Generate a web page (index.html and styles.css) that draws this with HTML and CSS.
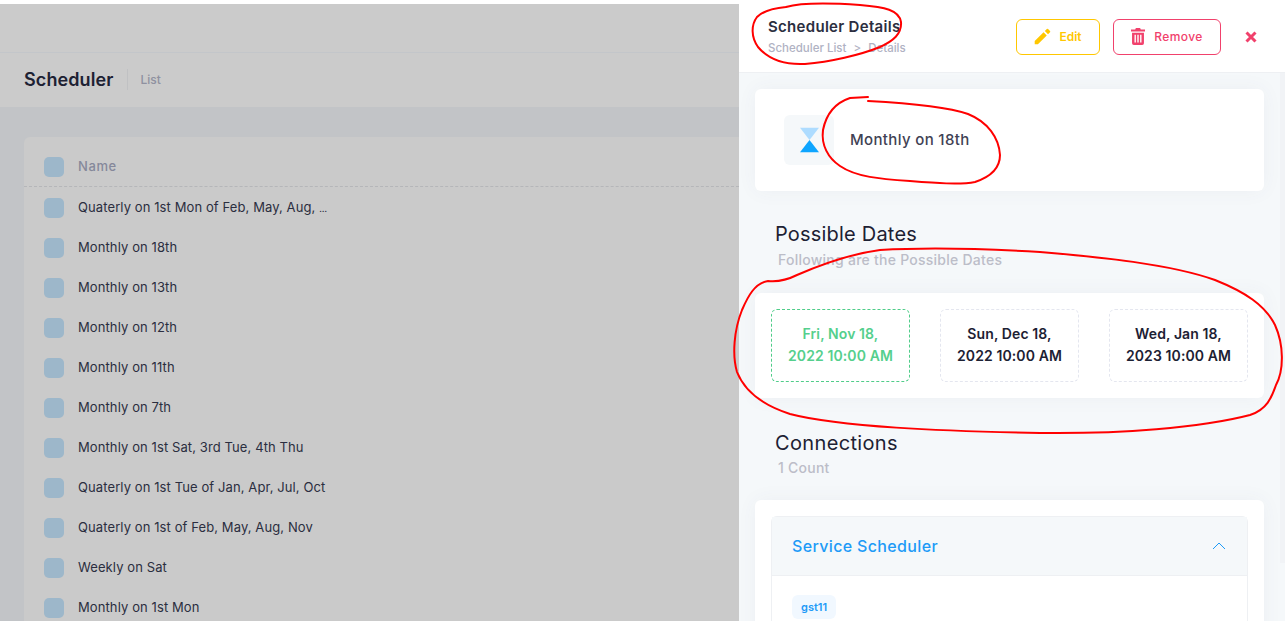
FILE: index.html
```html
<!DOCTYPE html>
<html lang="en">

<head>
    <meta charset="UTF-8">
    <meta name="viewport" content="width=device-width, initial-scale=1.0">
    <title>Scheduler Details</title>
    <link rel="stylesheet" href="styles.css">
</head>

<body>
    <div class="page">
        <main class="list-side">
            <div class="top-bar"></div>
            <div class="sub-bar">
                <h1 class="sub-title">Scheduler</h1>
                <span class="sub-crumb">List</span>
            </div>
            <div class="list-wrap">
                <section class="list-card">
                    <div class="row head-row"><span class="check"></span><span>Name</span></div>
                    <div class="row"><span class="check"></span><span>Quaterly on 1st Mon of Feb, May, Aug, <span class="dots">…</span></span></div>
                    <div class="row"><span class="check"></span><span>Monthly on 18th</span></div>
                    <div class="row"><span class="check"></span><span>Monthly on 13th</span></div>
                    <div class="row"><span class="check"></span><span>Monthly on 12th</span></div>
                    <div class="row"><span class="check"></span><span>Monthly on 11th</span></div>
                    <div class="row"><span class="check"></span><span>Monthly on 7th</span></div>
                    <div class="row"><span class="check"></span><span>Monthly on 1st Sat, 3rd Tue, 4th Thu</span></div>
                    <div class="row"><span class="check"></span><span>Quaterly on 1st Tue of Jan, Apr, Jul, Oct</span></div>
                    <div class="row"><span class="check"></span><span>Quaterly on 1st of Feb, May, Aug, Nov</span></div>
                    <div class="row"><span class="check"></span><span>Weekly on Sat</span></div>
                    <div class="row"><span class="check"></span><span>Monthly on 1st Mon</span></div>
                </section>
            </div>
        </main>

        <aside class="drawer">
            <header class="drawer-head">
                <div class="drawer-titles">
                    <h2 class="drawer-title">Scheduler Details</h2>
                    <div class="drawer-crumb">Scheduler List<span class="crumb-sep">&gt;</span>Details</div>
                </div>
                <button class="btn btn-edit">
                    <svg class="btn-icon" viewBox="0 0 24 24"><path fill="currentColor" d="M1 18.500V23h4.500L18 10.500 13.500 6 1 18.500zM22.600 5.900a1.300 1.300 0 000-1.800l-2.700-2.700a1.300 1.300 0 00-1.800 0L15.300 4.200l4.500 4.500 2.800-2.800z"/></svg>
                    Edit
                </button>
                <button class="btn btn-remove">
                    <svg class="btn-icon trash-icon" viewBox="0 0 20 24"><path fill="currentColor" fill-rule="evenodd" d="M7 0h6l1 2h6v3H0V2h6l1-2zM1.500 6.500h17V21.500A2.500 2.500 0 0116 24H4a2.500 2.500 0 01-2.500-2.500V6.500zM5 9.500v11h2v-11H5zM9 9.500v11h2v-11H9zM13 9.500v11h2v-11h-2z"/></svg>
                    Remove
                </button>
                <button class="btn-close">
                    <svg class="close-icon" viewBox="0 0 12 12"><path d="M1.500 1.500l9 9M10.500 1.500l-9 9"/></svg>
                </button>
            </header>

            <div class="drawer-body">
                <section class="card info-card">
                    <div class="icon-tile">
                        <svg class="glass" viewBox="0 0 20 26">
                            <path fill="#aedcff" d="M0 0h20L10 13z"/>
                            <path fill="#0ea5ff" d="M10 13l10 13H0z"/>
                        </svg>
                    </div>
                    <div class="info-name">Monthly on 18th</div>
                </section>

                <h3 class="section-title">Possible Dates</h3>
                <p class="section-sub">Following are the Possible Dates</p>
                <section class="card dates-card">
                    <div class="date-tile date-active">Fri, Nov 18,<br>2022 10:00 AM</div>
                    <div class="date-tile">Sun, Dec 18,<br>2022 10:00 AM</div>
                    <div class="date-tile">Wed, Jan 18,<br>2023 10:00 AM</div>
                </section>

                <h3 class="section-title conn-title">Connections</h3>
                <p class="section-sub count-sub">1 Count</p>
                <section class="card conn-card">
                    <div class="accordion">
                        <div class="acc-head">
                            <span>Service Scheduler</span>
                            <svg class="chevron" viewBox="0 0 14 8"><path d="M1 7l6-6 6 6"/></svg>
                        </div>
                        <div class="acc-body"><span class="tag">gst11</span></div>
                    </div>
                </section>
            </div>
            <div class="scroll-strip"></div>
        </aside>
    </div>

    <!-- pen marks drawn over the screenshot -->
    <svg class="scribbles" viewBox="0 0 1285 621">
        <path d="M786 7C800 3 830 3 860 5C885 7 899 10 901 22C902 34 893 41 880 47C860 55 830 62 805 64C785 65 768 59 758 47C751 37 751 25 757 17C764 10 775 8 786 7"/>
        <path d="M868 97L850 98C835 103 826 115 823 130C821 145 828 158 840 166C856 177 880 179 910 181C935 183 960 185 975 182C990 177 1000 168 1000 155C999 138 988 122 968 114C945 106 905 103 868 101"/>
        <path d="M768 281C755 283 748 296 742 310C734 330 732 355 737 372C745 392 765 406 790 414C840 427 940 431 1040 433C1120 434 1200 428 1250 415C1268 409 1272 396 1276 385C1284 370 1284 345 1275 325C1265 305 1245 292 1215 280C1170 264 1100 257 1040 252C990 249 930 247 880 250C850 254 820 265 797 275C787 280 777 282 768 281"/>
    </svg>
</body>

</html>
```

FILE: styles.css
```css
* {
    margin: 0;
    padding: 0;
    box-sizing: border-box;
}

body {
    font-family: "Inter", "Open Sans", sans-serif;
    background-color: #fff;
    overflow: hidden;
    height: 621px;
}

.page {
    display: flex;
    height: 621px;
}

/* left side, dimmed by the drawer backdrop */
.list-side {
    width: 739px;
    margin-top: 4px;
    background-color: #c2c4c7;
    overflow: hidden;
}

.top-bar {
    height: 49px;
    background-color: #cbcbcb;
    border-bottom: 1px solid #c3c6ca;
}

.sub-bar {
    display: flex;
    align-items: center;
    height: 54px;
    padding: 0 0 2px 24px;
    background-color: #cbcbcb;
}

.sub-title {
    font-size: 18px;
    font-weight: 600;
    letter-spacing: 0.1px;
    color: #1d2133;
    padding-right: 13px;
    border-right: 1px solid #c0c1c3;
    line-height: 21px;
}

.sub-crumb {
    font-size: 12px;
    font-weight: 500;
    color: #8f91a0;
    margin-left: 13px;
}

.list-wrap {
    padding: 30px 0 0 24px;
}

.list-card {
    background-color: #cacaca;
    border-radius: 6px 0 0 0;
    padding-top: 9px;
}

.row {
    display: flex;
    align-items: center;
    height: 40px;
    padding-left: 20px;
    font-size: 13px;
    letter-spacing: 0.1px;
    color: #2b2e40;
}

.head-row {
    height: 41px;
    border-bottom: 1px dashed #b5b6b9;
    font-weight: 500;
    letter-spacing: 0.6px;
    color: #85889a;
}

.check {
    width: 20px;
    height: 20px;
    border-radius: 5px;
    background-color: #9db7ca;
    margin: 2px 14px 0 0;
}

.dots {
    font-size: 9px;
}

/* details drawer */
.drawer {
    position: relative;
    width: 546px;
    background-color: #f5f8fa;
    overflow: hidden;
}

.drawer-head {
    display: flex;
    align-items: center;
    height: 73px;
    padding: 0 0 0 29px;
    background-color: #fff;
    border-bottom: 1px solid #eef0f3;
}

.drawer-titles {
    width: 248px;
}

.drawer-title {
    font-size: 15px;
    font-weight: 600;
    letter-spacing: 0.3px;
    color: #2b2e40;
    line-height: 20px;
}

.drawer-crumb {
    font-size: 11.500px;
    font-weight: 500;
    color: #b0b2c3;
    margin-top: 4px;
}

.crumb-sep {
    margin: 0 7px;
}

.btn {
    display: flex;
    align-items: center;
    justify-content: center;
    gap: 8px;
    height: 36px;
    margin-top: 1px;
    border-radius: 6px;
    background-color: #fff;
    font-family: inherit;
    font-size: 12px;
    font-weight: 500;
}

.btn-edit {
    width: 84px;
    color: #ffc700;
    border: 1px solid #ffc700;
    margin-right: 13px;
    font-weight: 600;
}

.btn-remove {
    width: 108px;
    color: #f1416c;
    border: 1px solid #f1416c;
    letter-spacing: 0.4px;
}

.btn-icon {
    width: 17px;
    height: 17px;
}

.trash-icon {
    width: 14px;
    margin-right: 1px;
}

.btn-close {
    border: 0;
    background: none;
    margin: 1px 0 0 24px;
    display: flex;
}

.close-icon {
    width: 12px;
    height: 12px;
    fill: none;
    stroke: #f1416c;
    stroke-width: 3;
}

.drawer-body {
    padding: 16px 21px 0 16px;
}

.card {
    background-color: #fff;
    border-radius: 6px;
    box-shadow: 0 0 20px rgba(76, 87, 125, 0.05);
}

.info-card {
    display: flex;
    align-items: center;
    height: 102px;
    padding-left: 29px;
}

.icon-tile {
    display: flex;
    align-items: center;
    justify-content: center;
    width: 50px;
    height: 50px;
    border-radius: 6px;
    background-color: #f5f8fa;
}

.glass {
    width: 19px;
    height: 26px;
}

.info-name {
    margin: -1px 0 0 16px;
    font-size: 15px;
    font-weight: 500;
    letter-spacing: 0.35px;
    color: #3f4254;
}

.section-title {
    margin: 30px 0 0 20px;
    font-size: 20px;
    font-weight: 400;
    letter-spacing: 0.2px;
    line-height: 26px;
    color: #1d2133;
}

.section-sub {
    margin: 3px 0 0 23px;
    font-size: 14px;
    font-weight: 500;
    letter-spacing: 0.25px;
    line-height: 20px;
    color: #bcbdc8;
}

.count-sub {
    margin-top: 2px;
}

.dates-card {
    display: flex;
    justify-content: space-between;
    height: 105px;
    margin-top: 23px;
    padding: 16px;
}

.date-tile {
    width: 139px;
    height: 73px;
    border: 1px dashed #e4e6ef;
    border-radius: 6px;
    font-size: 14px;
    font-weight: 600;
    letter-spacing: 0.1px;
    line-height: 22px;
    text-align: center;
    padding-top: 13px;
    color: #1d2133;
}

.date-active {
    border-color: #50cd89;
    color: #55cf8d;
}

.conn-title {
    margin-top: 32px;
    letter-spacing: 0.35px;
}

.conn-card {
    margin-top: 22px;
    padding: 16px;
    height: 200px;
}

.accordion {
    border: 1px solid #eef0f3;
    border-radius: 6px;
}

.acc-head {
    display: flex;
    align-items: center;
    justify-content: space-between;
    height: 59px;
    padding: 0 21px 0 20px;
    background-color: #f5f8fa;
    border-bottom: 1px solid #eef0f3;
    font-size: 16px;
    font-weight: 500;
    letter-spacing: 0.35px;
    color: #1e9bf7;
}

.chevron {
    width: 14px;
    height: 8px;
    fill: none;
    stroke: #1e9bf7;
    stroke-width: 1;
}

.acc-body {
    padding: 19px 20px;
}

.tag {
    display: inline-block;
    height: 24px;
    padding: 0 9px;
    border-radius: 6px;
    background-color: #f1f8ff;
    font-size: 11px;
    font-weight: 600;
    line-height: 24px;
    color: #1e9bf7;
}

.scroll-strip {
    position: absolute;
    top: 73px;
    right: 0;
    width: 5px;
    height: 490px;
    background-color: #f1f3f6;
}

.scribbles {
    position: absolute;
    top: 0;
    left: 0;
    width: 1285px;
    height: 621px;
    fill: none;
    stroke: #f00;
    stroke-width: 2;
    stroke-linecap: round;
}
```
